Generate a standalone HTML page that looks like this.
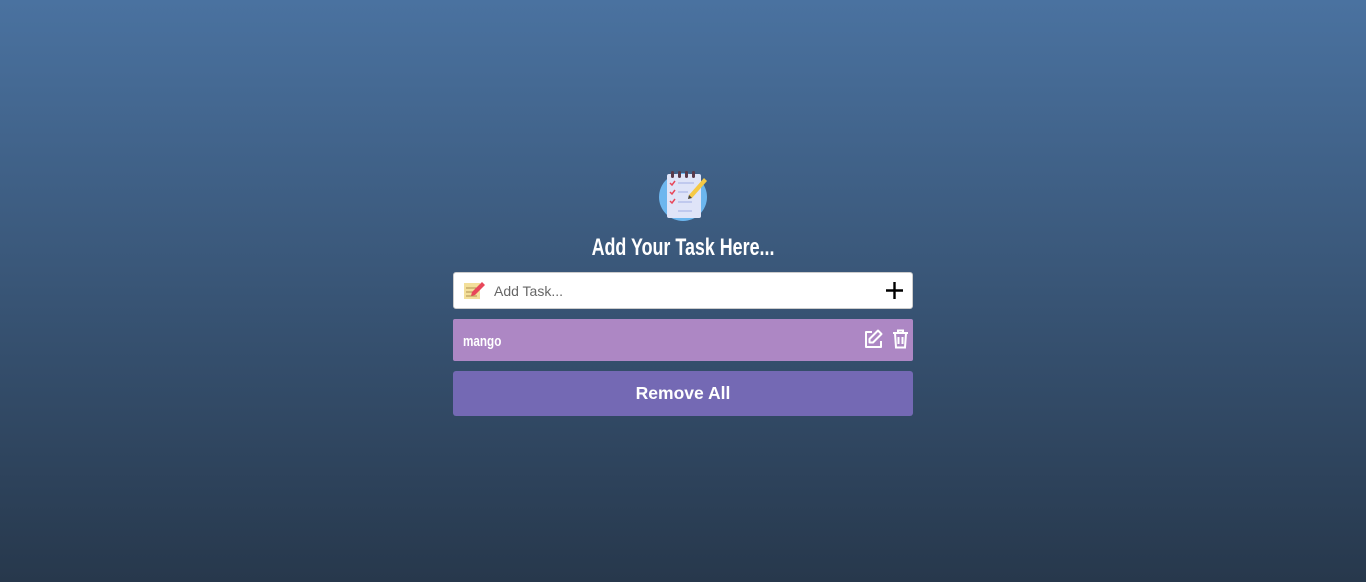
<!DOCTYPE html>
<html><head><meta charset="utf-8"><style>
html,body{margin:0;height:582px;width:1366px;overflow:hidden}
body{background:linear-gradient(#4a72a0,#27384c);font-family:"Liberation Sans",sans-serif}
.icon{position:absolute;left:658px;top:170px}
h1{position:absolute;left:0;width:1366px;top:233px;margin:0;text-align:center;color:#fff;font:bold 24px "Liberation Sans",sans-serif;line-height:30px;transform:scaleX(0.745);transform-origin:683px 0}
.inp{position:absolute;left:453px;top:272px;width:458px;height:35px;background:#fff;border:1px solid #ccc;border-radius:3px}
.inp span{position:absolute;left:40px;top:10px;font-size:14px;color:#666}
.task{position:absolute;left:453px;top:319px;width:460px;height:42px;background:#ad87c4;border-radius:2px}
.task span{position:absolute;left:10px;top:14px;color:#fff;font:bold 15px "Liberation Sans",sans-serif;transform:scaleX(0.78);transform-origin:0 0}
.rm{position:absolute;left:453px;top:371px;width:460px;height:45px;background:#7469b4;border-radius:3px;color:#fff;font-weight:bold;font-size:17.5px;text-align:center;line-height:44px}
</style></head><body>
<svg class="icon" width="50" height="52" viewBox="0 0 50 52">
<circle cx="25" cy="27" r="24" fill="#6cb6ee"/>
<rect x="9" y="4" width="34" height="44" rx="2" fill="#dfe4f8"/>
<g fill="#5a3a4a"><rect x="13" y="1" width="3" height="7" rx="1.5"/><rect x="20" y="1" width="3" height="7" rx="1.5"/><rect x="27" y="1" width="3" height="7" rx="1.5"/><rect x="34" y="1" width="3" height="7" rx="1.5"/></g>
<g stroke="#b5c0ea" stroke-width="1.5"><line x1="20" y1="13" x2="36" y2="13"/><line x1="20" y1="22" x2="30" y2="22"/><line x1="20" y1="32" x2="34" y2="32"/><line x1="20" y1="41" x2="34" y2="41"/></g>
<g stroke="#e8475a" stroke-width="1.5" fill="none"><path d="M12 13l2 2 3-4"/><path d="M12 22l2 2 3-4"/><path d="M12 31l2 2 3-4"/></g>
<path d="M46 8l3 3-15 17-4 1 1-4z" fill="#f6c944"/><path d="M31 25l3 3-4 1z" fill="#444"/>
</svg>
<h1>Add Your Task Here...</h1>
<div class="inp">
<svg style="position:absolute;left:9px;top:7px" width="22" height="20" viewBox="0 0 22 20"><rect x="1" y="3" width="16" height="16" fill="#f3df9a"/><g stroke="#b09050"><line x1="3" y1="8" x2="14" y2="8"/><line x1="3" y1="12" x2="12" y2="12"/><line x1="3" y1="16" x2="14" y2="16"/></g><path d="M19 2l3 3-10 10-4 1 1-4z" fill="#e8475a"/></svg>
<span>Add Task...</span>
<svg style="position:absolute;right:8px;top:8px" width="19" height="19"><path d="M9.5 1v17M1 9.5h17" stroke="#000" stroke-width="2.4"/></svg>
</div>
<div class="task"><span>mango</span>
<svg style="position:absolute;left:410px;top:10px" width="20" height="20" viewBox="0 0 20 20" fill="none" stroke="#fff" stroke-width="2" stroke-linejoin="round"><path d="M9 3H3v15h15v-6"/><path d="M15 1.5l3.5 3.5-8.5 8.5H6.5V10z"/></svg>
<svg style="position:absolute;left:439px;top:10px" width="17" height="20" viewBox="0 0 17 20" fill="none" stroke="#fff" stroke-width="2"><path d="M1 4h15M6 4V1.5h5V4M3 4l1 14.5h9L14 4M6.5 8v7M10.5 8v7"/></svg>
</div>
<div class="rm">Remove All</div>
</body></html>
